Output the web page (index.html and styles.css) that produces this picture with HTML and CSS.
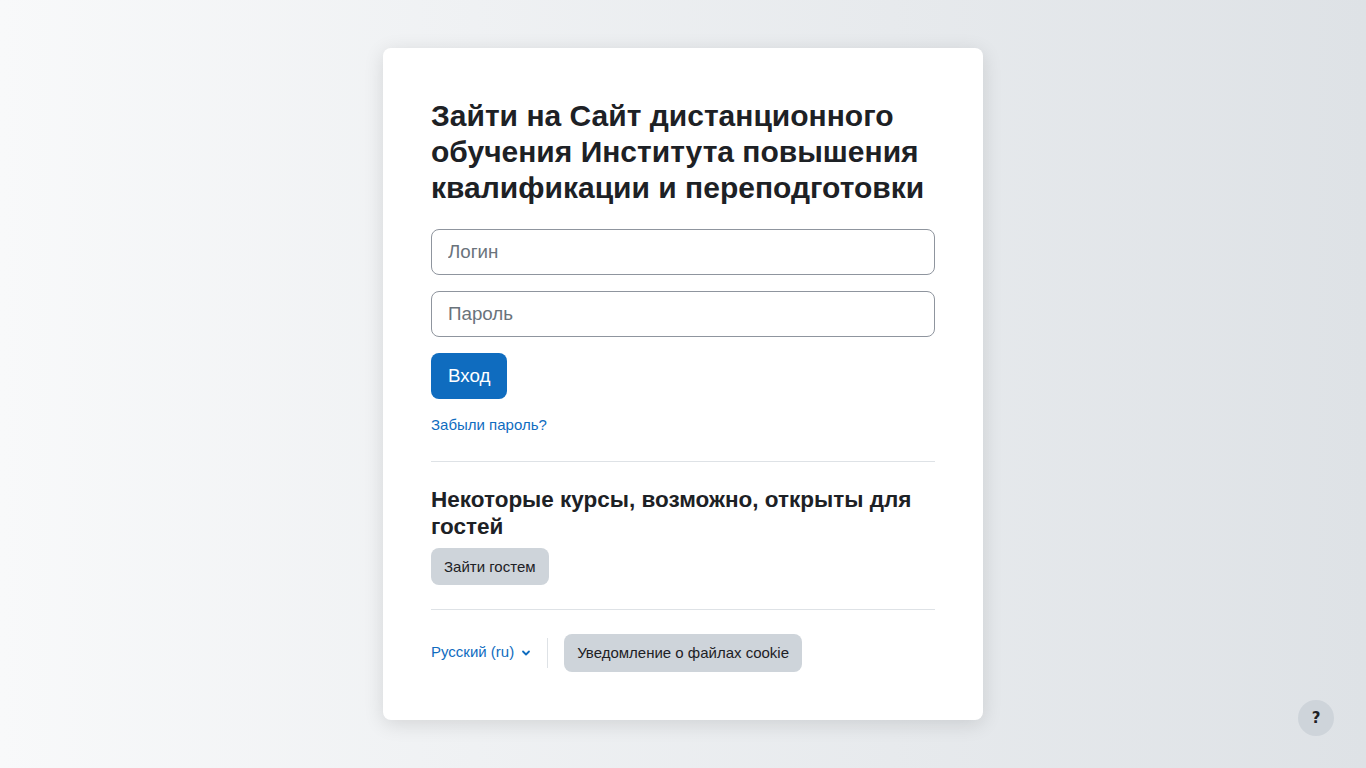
FILE: index.html
```html
<!DOCTYPE html>
<html lang="ru">
<head>
<meta charset="utf-8">
<title>Вход</title>
<link rel="stylesheet" href="styles.css">
</head>
<body>
<div class="page">
  <div class="card">
    <h1 class="title">Зайти на Сайт дистанционного обучения Института повышения квалификации и переподготовки</h1>
    <form class="form">
      <input class="field" type="text" placeholder="Логин">
      <input class="field" type="password" placeholder="Пароль">
      <div><button type="button" class="btn-primary">Вход</button></div>
    </form>
    <a class="link forgot" href="#">Забыли пароль?</a>
    <hr class="divider">
    <h2 class="subtitle">Некоторые курсы, возможно, открыты для гостей</h2>
    <div><button type="button" class="btn-secondary">Зайти гостем</button></div>
    <hr class="divider">
    <div class="footer">
      <a class="link lang" href="#">Русский ‎(ru)‎
        <svg class="chev" width="10" height="10" viewBox="0 0 10 10"><path d="M2 3.5 L5 6.5 L8 3.5" fill="none" stroke="#0f6cbf" stroke-width="1.8" stroke-linecap="round" stroke-linejoin="round"/></svg>
      </a>
      <span class="sep"></span>
      <button type="button" class="btn-secondary btn-cookie">Уведомление о файлах cookie</button>
    </div>
  </div>
</div>
<button type="button" class="help">?</button>
</body>
</html>
```
FILE: styles.css
```css
* { box-sizing: border-box; }
html, body { height: 100%; }
body {
  margin: 0;
  font-family: "Liberation Sans", Arial, sans-serif;
  color: #1d2125;
  background: linear-gradient(to right, #f8f9fa 0%, #dee2e6 100%);
  font-size: 15px;
  line-height: 1.5;
}
.page {
  display: flex;
  justify-content: center;
  padding-top: 48px;
}
.card {
  width: 600px;
  background: #fff;
  border-radius: 8px;
  padding: 48px;
  box-shadow: 0 4px 20px rgba(0,0,0,0.12);
}
.title {
  margin: 2px 0 23px;
  font-size: 30px;
  line-height: 36px;
  font-weight: 700;
}
.form {
  display: flex;
  flex-direction: column;
  gap: 16px;
}
.field {
  width: 100%;
  height: 46px;
  border: 1px solid #8f959e;
  border-radius: 8px;
  padding: 0 16px;
  font-family: inherit;
  font-size: 18.75px;
  color: #1d2125;
  background: #fff;
}
.field::placeholder { color: #6a737b; }
.btn-primary {
  height: 46px;
  padding: 0 17px;
  border: none;
  border-radius: 8px;
  background: #0f6cbf;
  color: #fff;
  font-family: inherit;
  font-size: 18.75px;
}
.link {
  color: #0f6cbf;
  text-decoration: none;
  font-size: 15px;
}
.forgot {
  display: inline-block;
  margin-top: 15px;
  line-height: 22.5px;
}
.divider {
  border: 0;
  border-top: 1px solid #dee2e6;
  margin: 24px 0;
}
.subtitle {
  margin: 0 0 8px;
  font-size: 22.5px;
  line-height: 27px;
  font-weight: 700;
}
.btn-secondary {
  height: 37px;
  padding: 0 13px;
  border: none;
  border-radius: 8px;
  background: #ced4da;
  color: #1d2125;
  font-family: inherit;
  font-size: 15px;
}
.footer {
  display: flex;
  align-items: center;
}
.lang {
  display: flex;
  align-items: center;
  gap: 7px;
}
.chev { display: block; }
.sep {
  width: 1px;
  height: 30px;
  background: #dee2e6;
  margin: 0 16px;
}
.btn-cookie { height: 38px; }
.help {
  position: fixed;
  right: 32px;
  bottom: 32px;
  width: 36px;
  height: 36px;
  border-radius: 50%;
  border: none;
  background: #ced4da;
  color: #1d2125;
  font-family: "DejaVu Sans", sans-serif;
  font-weight: 700;
  font-size: 15px;
  padding: 0;
}
```
